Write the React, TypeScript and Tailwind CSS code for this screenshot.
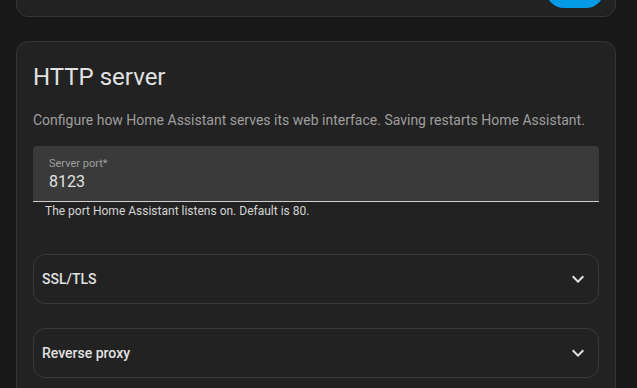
import { ReactNode } from 'react';

function ExpandMore() {
  return (
    <svg viewBox="0 0 24 24" width={24} height={24} className="fill-[#e1e1e1]">
      <path d="M16.59 8.59L12 13.17 7.41 8.59 6 10l6 6 6-6z" />
    </svg>
  );
}

function Expansion({ title }: { title: string }) {
  return (
    <div className="flex h-[50px] items-center justify-between rounded-xl border border-[#383838] pl-2 pr-2">
      <span className="text-[14px] font-medium text-[#e1e1e1]">{title}</span>
      <ExpandMore />
    </div>
  );
}

function Card({ children, className }: { children: ReactNode; className?: string }) {
  return <div className={`rounded-xl border border-[#353535] bg-[#222222] ${className ?? ''}`}>{children}</div>;
}

export default function App() {
  return (
    <div
      className="h-[388px] overflow-hidden bg-[#181818] px-4"
      style={{ fontFamily: 'Roboto, "Liberation Sans", sans-serif' }}
    >
      <div className="flex w-[600px] flex-col gap-6">
        <Card className="mt-[-43px] flex h-[60px] items-end justify-end pb-2 pr-[11px]">
          <div className="h-9 w-[58px] rounded-full bg-[#039be5]" />
        </Card>

        <Card className="px-4 pt-[19px] pb-6">
          <h1 className="text-[24px] leading-8 font-normal text-[#e1e1e1]">HTTP server</h1>
          <p className="mt-[17px] text-[14px] leading-5 text-[#9e9e9e]">
            Configure how Home Assistant serves its web interface. Saving restarts Home Assistant.
          </p>

          <div className="mt-4">
            <div className="flex h-14 flex-col justify-center rounded-t border-b border-[#cfcfcf] bg-[#3a3a3a] px-4">
              <span className="text-[11px] leading-4 text-[#9e9e9e]">Server port*</span>
              <span className="text-[16px] leading-5 text-[#e1e1e1]">8123</span>
            </div>
            <div className="px-3 pt-px text-[12px] leading-4 text-[#d4d4d4]">
              The port Home Assistant listens on. Default is 80.
            </div>
          </div>

          <div className="mt-[35px] flex flex-col gap-6">
            <Expansion title="SSL/TLS" />
            <Expansion title="Reverse proxy" />
          </div>
        </Card>
      </div>
    </div>
  );
}
